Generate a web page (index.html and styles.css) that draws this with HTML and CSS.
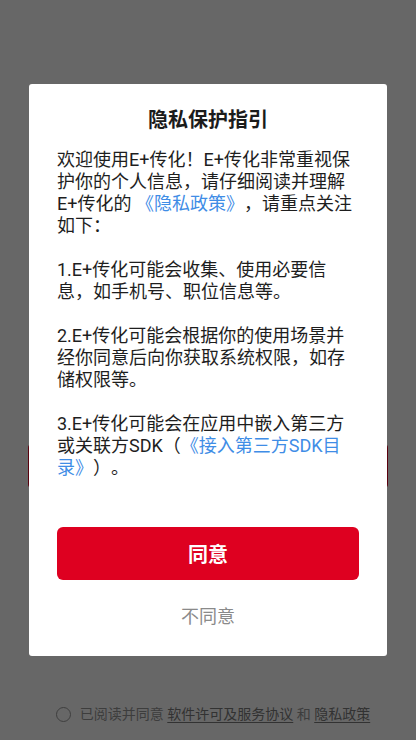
FILE: index.html
```html
<!DOCTYPE html>
<html lang="zh-CN">
<head>
<meta charset="utf-8">
<title>隐私保护指引</title>
<link rel="stylesheet" href="styles.css">
</head>
<body>
<div class="page">
  <div class="login-btn"></div>
  <div class="agree">
    <span class="radio"></span>
    <span class="agree-text">已阅读并同意 <span class="agree-link">软件许可及服务协议</span> 和 <span class="agree-link">隐私政策</span></span>
  </div>
</div>
<div class="overlay">
  <div class="dialog">
    <h1 class="dialog-title">隐私保护指引</h1>
    <div class="dialog-body">
      <p class="para">欢迎使用E+传化！E+传化非常重视保<br>护你的个人信息，请仔细阅读并理解<br>E+传化的 <span class="link">《隐私政策》</span>，请重点关注<br>如下：</p>
      <p class="para">1.E+传化可能会收集、使用必要信<br>息，如手机号、职位信息等。</p>
      <p class="para">2.E+传化可能会根据你的使用场景并<br>经你同意后向你获取系统权限，如存<br>储权限等。</p>
      <p class="para last">3.E+传化可能会在应用中嵌入第三方<br>或关联方SDK（<span class="link">《接入第三方SDK目<br>录》</span>）。</p>
    </div>
    <div class="btn-agree">同意</div>
    <div class="btn-disagree">不同意</div>
  </div>
</div>
</body>
</html>
```
FILE: styles.css
```css
* { box-sizing: border-box; }
html, body {
  margin: 0;
  padding: 0;
  background: #ffffff;
}
body {
  font-family: Roboto, "Noto Sans CJK SC", sans-serif;
  width: 416px;
  height: 740px;
  overflow: hidden;
  text-spacing-trim: space-all;
}
.page {
  height: 740px;
  display: flex;
  flex-direction: column;
  padding: 444px 28px 0;
}
.login-btn {
  height: 44px;
  background: #de0020;
  border-radius: 4px;
}
.agree {
  margin-top: 216px;
  height: 20px;
  display: flex;
  align-items: center;
  justify-content: center;
  gap: 9px;
  padding-left: 10px;
  font-size: 14px;
  line-height: 20px;
  color: #979797;
}
.radio {
  width: 15px;
  height: 15px;
  border: 1.5px solid #9a9a9a;
  border-radius: 50%;
  flex: none;
}
.agree-link {
  color: #7c7c7c;
  text-decoration: underline;
  text-underline-offset: 3px;
}
.overlay {
  position: fixed;
  inset: 0;
  background: rgba(0, 0, 0, 0.597);
  display: flex;
  align-items: center;
  justify-content: center;
}
.dialog {
  width: 358px;
  height: 572px;
  background: #ffffff;
  border-radius: 3px;
  padding: 22px 28px 0;
  display: flex;
  flex-direction: column;
}
.dialog-title {
  margin: 0;
  font-size: 20px;
  line-height: 28px;
  font-weight: 700;
  color: #1b1b1b;
  text-align: center;
}
.dialog-body {
  margin-top: 15px;
  margin-right: -24px;
  font-size: 18px;
  line-height: 22px;
  color: #1e1e1e;
}
.para {
  margin: 0 0 22px;
  white-space: nowrap;
}
.para.last { margin-bottom: 0; }
.link { color: #3f8de6; }
.btn-agree {
  margin-top: 48px;
  height: 53px;
  flex: none;
  background: #de0020;
  border-radius: 6px;
  color: #ffffff;
  font-size: 20px;
  font-weight: 700;
  display: flex;
  align-items: center;
  justify-content: center;
}
.btn-disagree {
  margin-top: 25px;
  font-size: 18px;
  line-height: 24px;
  color: #8a8a8a;
  text-align: center;
}
```
